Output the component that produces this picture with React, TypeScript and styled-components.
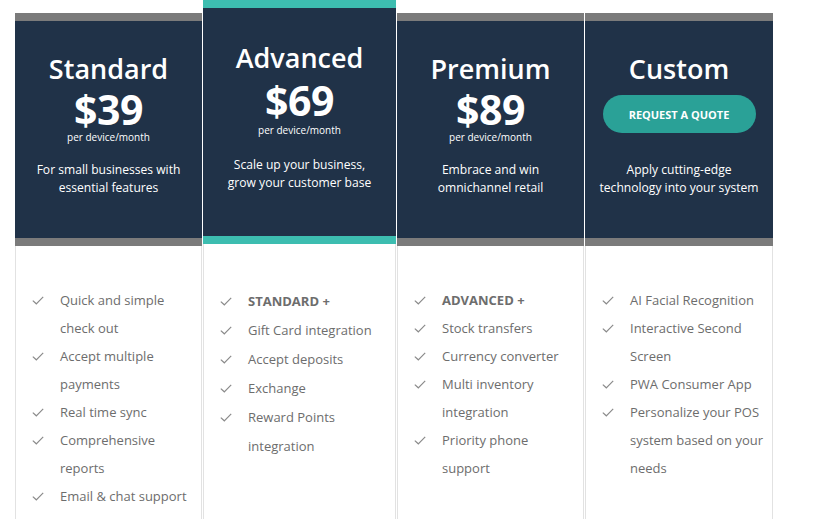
import React from 'react';
import styled, { createGlobalStyle } from 'styled-components';

const GlobalStyle = createGlobalStyle`
  html, body {
    margin: 0;
    padding: 0;
    background: #ffffff;
  }
  body {
    font-family: "Open Sans", "Liberation Sans", sans-serif;
  }
`;

const Page = styled.div`
  display: flex;
  align-items: stretch;
  gap: 1px;
  height: 519px;
  padding-left: 15px;
  box-sizing: border-box;
  overflow: hidden;
`;

interface CardProps {
  featured?: boolean
  width: number
}

const Card = styled.div<CardProps>`
  display: flex;
  flex-direction: column;
  width: ${({ width }) => width + 'px'};
  margin-top: ${({ featured }) => (featured ? '0' : '13px')};
`;

const Header = styled.div<{ featured?: boolean }>`
  display: flex;
  flex-direction: column;
  align-items: center;
  text-align: center;
  background: #203248;
  color: #ffffff;
  border-top: 8px solid ${({ featured }) => (featured ? '#3dbdb0' : '#7b7b7b')};
  border-bottom: 8px solid ${({ featured }) => (featured ? '#3dbdb0' : '#7b7b7b')};
  height: ${({ featured }) => (featured ? '244px' : '233px')};
  padding-top: ${({ featured }) => (featured ? '34px' : '32px')};
  box-sizing: border-box;
`;

const Title = styled.div`
  font-size: 27px;
  font-weight: 600;
  line-height: 32px;
`;

const Price = styled.div<{ featured?: boolean }>`
  font-size: 41px;
  font-weight: 700;
  line-height: 40px;
  margin-top: ${({ featured }) => (featured ? '6px' : '4px')};
  letter-spacing: -0.5px;
`;

const Per = styled.div<{ featured?: boolean }>`
  font-size: 10px;
  line-height: 12px;
  margin-top: ${({ featured }) => (featured ? '4px' : '2px')};
`;

const Desc = styled.div<{ gap: number }>`
  font-size: 12.1px;
  line-height: 18px;
  margin-top: ${({ gap }) => gap + 'px'};
  padding: 0 6px;
`;

const QuoteButton = styled.button`
  margin-top: 10px;
  width: 153px;
  height: 38px;
  border: none;
  border-radius: 19px;
  background: #2aa197;
  color: #ffffff;
  font-family: inherit;
  font-size: 11px;
  font-weight: 700;
  cursor: pointer;
`;

const Body = styled.ul<{ top: number; line: number }>`
  flex: 1;
  list-style: none;
  margin: 0;
  padding: ${({ top }) => top + 'px'} 4px 0 16px;
  border-left: 1px solid #e2e2e2;
  border-right: 1px solid #e2e2e2;
  font-size: 13px;
  line-height: ${({ line }) => line + 'px'};
  color: #6d6d6d;
`;

const Item = styled.li<{ strong?: boolean }>`
  display: flex;
  align-items: flex-start;
  font-weight: ${({ strong }) => (strong ? 700 : 400)};
`;

const CheckBox = styled.span<{ line: number }>`
  flex: none;
  width: 28px;
  height: ${({ line }) => line + 'px'};
  display: flex;
  align-items: center;
`;

const Label = styled.span<{ wrap: number }>`
  max-width: ${({ wrap }) => wrap + 'px'};
`;

const Check = () => (
  <svg width="12" height="9" viewBox="0 0 12 9" fill="none">
    <path d="M0.8 4.6 L4.3 7.8 L11.2 0.8" stroke="#8a8a8a" strokeWidth="1.2" />
  </svg>
);

type Plan = {
  name: string
  price?: string
  desc: string[]
  width: number
  featured?: boolean
  top: number
  line: number
  wrap: number
  items: { text: string; strong?: boolean }[]
};

const plans: Plan[] = [
  {
    name: 'Standard',
    price: '$39',
    desc: ['For small businesses with', 'essential features'],
    width: 187,
    top: 40,
    line: 28,
    wrap: 134,
    items: [
      { text: 'Quick and simple check out' },
      { text: 'Accept multiple payments' },
      { text: 'Real time sync' },
      { text: 'Comprehensive reports' },
      { text: 'Email & chat support' },
    ],
  },
  {
    name: 'Advanced',
    price: '$69',
    desc: ['Scale up your business,', 'grow your customer base'],
    width: 193,
    featured: true,
    top: 43,
    line: 29,
    wrap: 134,
    items: [
      { text: 'STANDARD +', strong: true },
      { text: 'Gift Card integration' },
      { text: 'Accept deposits' },
      { text: 'Exchange' },
      { text: 'Reward Points integration' },
    ],
  },
  {
    name: 'Premium',
    price: '$89',
    desc: ['Embrace and win', 'omnichannel retail'],
    width: 187,
    top: 40,
    line: 28,
    wrap: 130,
    items: [
      { text: 'ADVANCED +', strong: true },
      { text: 'Stock transfers' },
      { text: 'Currency converter' },
      { text: 'Multi inventory integration' },
      { text: 'Priority phone support' },
    ],
  },
  {
    name: 'Custom',
    desc: ['Apply cutting-edge', 'technology into your system'],
    width: 188,
    top: 40,
    line: 28,
    wrap: 140,
    items: [
      { text: 'AI Facial Recognition' },
      { text: 'Interactive Second Screen' },
      { text: 'PWA Consumer App' },
      { text: 'Personalize your POS system based on your needs' },
    ],
  },
];

export default function App() {
  return (
    <>
      <GlobalStyle />
      <Page>
        {plans.map(function (plan) {
          return (
            <Card key={plan.name} featured={plan.featured} width={plan.width}>
              <Header featured={plan.featured}>
                <Title>{plan.name}</Title>
                {plan.price ? (
                  <>
                    <Price featured={plan.featured}>{plan.price}</Price>
                    <Per featured={plan.featured}>per device/month</Per>
                  </>
                ) : (
                  <QuoteButton>REQUEST A QUOTE</QuoteButton>
                )}
                <Desc gap={plan.price ? (plan.featured ? 20 : 18) : 28}>
                  {plan.desc[0]}
                  <br />
                  {plan.desc[1]}
                </Desc>
              </Header>
              <Body top={plan.top} line={plan.line}>
                {plan.items.map(function (item) {
                  return (
                    <Item key={item.text} strong={item.strong}>
                      <CheckBox line={plan.line}>
                        <Check />
                      </CheckBox>
                      <Label wrap={plan.wrap}>{item.text}</Label>
                    </Item>
                  );
                })}
              </Body>
            </Card>
          );
        })}
      </Page>
    </>
  );
}
